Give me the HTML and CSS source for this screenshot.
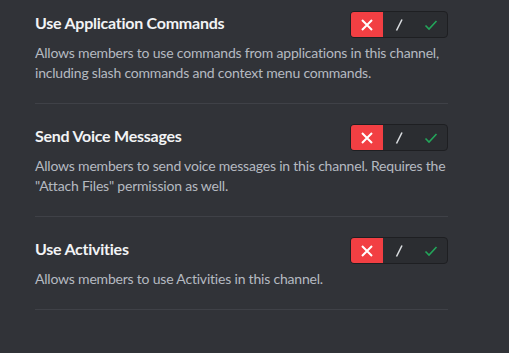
FILE: index.html
```html
<!DOCTYPE html>
<html lang="en">
<head>
    <meta charset="UTF-8">
    <meta name="viewport" content="width=device-width, initial-scale=1.0">
    <title>Channel Permissions</title>
    <link rel="stylesheet" href="styles.css">
</head>
<body>
    <div class="perm-list">
        <div class="perm">
            <div class="perm-row">
                <h3 class="perm-title">Use Application Commands</h3>
                <div class="tri-toggle">
                    <button class="deny active" aria-label="Deny">
                        <svg width="14" height="14" viewBox="0 0 14 14"><path d="M2 2L12 12M12 2L2 12" stroke="currentColor" stroke-width="2" fill="none"/></svg>
                    </button>
                    <button class="pass" aria-label="Inherit">
                        <svg width="10" height="14" viewBox="0 0 10 14"><path d="M8 1.5L2.5 12.5" stroke="currentColor" stroke-width="1.6" fill="none"/></svg>
                    </button>
                    <button class="allow" aria-label="Allow">
                        <svg width="14" height="12" viewBox="0 0 14 12"><path d="M1.5 6.5L5 10L12.5 2" stroke="currentColor" stroke-width="1.6" fill="none"/></svg>
                    </button>
                </div>
            </div>
            <p class="perm-desc">Allows members to use commands from applications in this channel, including slash commands and context menu commands.</p>
        </div>
        <div class="perm">
            <div class="perm-row">
                <h3 class="perm-title">Send Voice Messages</h3>
                <div class="tri-toggle">
                    <button class="deny active" aria-label="Deny">
                        <svg width="14" height="14" viewBox="0 0 14 14"><path d="M2 2L12 12M12 2L2 12" stroke="currentColor" stroke-width="2" fill="none"/></svg>
                    </button>
                    <button class="pass" aria-label="Inherit">
                        <svg width="10" height="14" viewBox="0 0 10 14"><path d="M8 1.5L2.5 12.5" stroke="currentColor" stroke-width="1.6" fill="none"/></svg>
                    </button>
                    <button class="allow" aria-label="Allow">
                        <svg width="14" height="12" viewBox="0 0 14 12"><path d="M1.5 6.5L5 10L12.5 2" stroke="currentColor" stroke-width="1.6" fill="none"/></svg>
                    </button>
                </div>
            </div>
            <p class="perm-desc">Allows members to send voice messages in this channel. Requires the "Attach Files" permission as well.</p>
        </div>
        <div class="perm">
            <div class="perm-row">
                <h3 class="perm-title">Use Activities</h3>
                <div class="tri-toggle">
                    <button class="deny active" aria-label="Deny">
                        <svg width="14" height="14" viewBox="0 0 14 14"><path d="M2 2L12 12M12 2L2 12" stroke="currentColor" stroke-width="2" fill="none"/></svg>
                    </button>
                    <button class="pass" aria-label="Inherit">
                        <svg width="10" height="14" viewBox="0 0 10 14"><path d="M8 1.5L2.5 12.5" stroke="currentColor" stroke-width="1.6" fill="none"/></svg>
                    </button>
                    <button class="allow" aria-label="Allow">
                        <svg width="14" height="12" viewBox="0 0 14 12"><path d="M1.5 6.5L5 10L12.5 2" stroke="currentColor" stroke-width="1.6" fill="none"/></svg>
                    </button>
                </div>
            </div>
            <p class="perm-desc">Allows members to use Activities in this channel.</p>
        </div>
    </div>
</body>
</html>
```

FILE: styles.css
```css
body {
    font-family: 'Lato', sans-serif;
    background-color: #313338;
    margin: 0;
    padding: 0;
}
.perm-list {
    width: 413px;
    margin-left: 35px;
}
.perm {
    padding: 20px 0 20px;
    border-bottom: 1px solid #3f4147;
}
.perm:first-child {
    padding-top: 11px;
}
.perm-row {
    display: flex;
    justify-content: space-between;
    align-items: flex-start;
}
.perm-title {
    margin: 2px 0 0;
    font-size: 16px;
    line-height: 20px;
    font-weight: 700;
    letter-spacing: -0.25px;
    color: #f2f3f5;
}
.perm-desc {
    margin: 5px 0 0;
    font-size: 14px;
    line-height: 20px;
    letter-spacing: -0.2px;
    color: #b5bac1;
}
.tri-toggle {
    display: flex;
    height: 25px;
    border: 1px solid #1e1f22;
    border-radius: 4px;
    overflow: hidden;
    background-color: #2b2d31;
}
.tri-toggle button {
    width: 32px;
    height: 25px;
    padding: 0;
    border: none;
    background: none;
    display: flex;
    align-items: center;
    justify-content: center;
    cursor: pointer;
}
.tri-toggle .deny {
    color: #fff;
}
.tri-toggle .deny.active {
    background-color: #f23f43;
}
.tri-toggle .pass {
    color: #dbdee1;
}
.tri-toggle .allow {
    color: #23a55a;
}
```
